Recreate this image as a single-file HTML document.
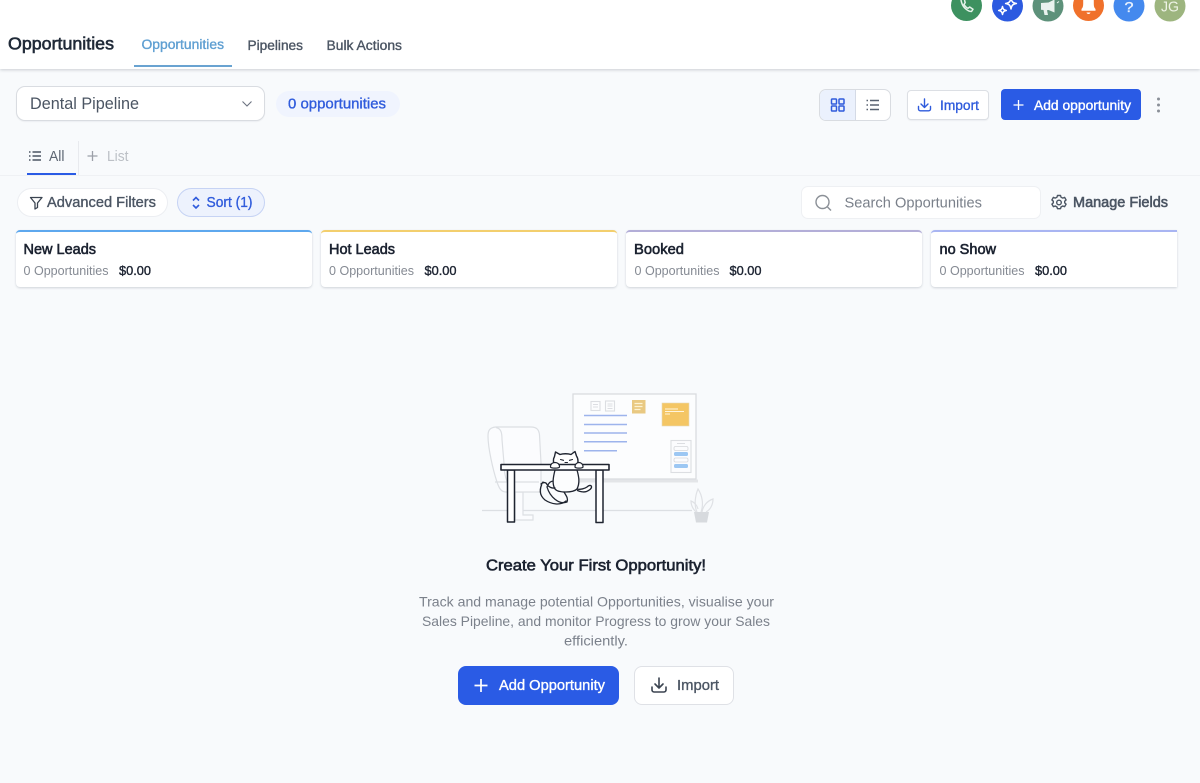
<!DOCTYPE html>
<html lang="en"><head><meta charset="utf-8"><title>Opportunities</title>
<style>
html,body{margin:0;padding:0;width:1200px;height:783px;overflow:hidden;background:#f8fafc}
body{position:relative;font-family:"Liberation Sans",Arial,sans-serif}
.b{position:absolute;box-sizing:border-box}
svg{position:absolute;left:0;top:0}
text{font-family:"Liberation Sans",Arial,sans-serif}
.m{stroke-width:.35;paint-order:stroke}
.s{stroke-width:.6;paint-order:stroke}
.card{background:#fff;border-radius:4px;height:57.5px;top:229.5px;border-top:2px solid;box-shadow:0 1px 2px rgba(30,40,60,.18)}
</style></head><body>
<div class="b" style="left:0;top:0;width:1200px;height:69px;background:#fff;box-shadow:0 1px 3px rgba(40,50,70,.22)"></div>
<div class="b" style="left:134px;top:65px;width:98px;height:2px;background:#69a3d1"></div>
<div class="b" style="left:16px;top:86px;width:249px;height:35px;background:#fff;border:1px solid #d9dce1;border-radius:9px;box-shadow:0 1px 1px rgba(30,40,60,.05)"></div>
<div class="b" style="left:276px;top:91px;width:124px;height:26px;background:#f0f4fe;border-radius:13px"></div>
<div class="b" style="left:819px;top:89px;width:72px;height:32px;background:#fff;border:1px solid #d9dce1;border-radius:7px;overflow:hidden"><div style="width:36px;height:100%;background:#ebf1fd;border-right:1px solid #d4dae6;box-sizing:border-box"></div></div>
<div class="b" style="left:907px;top:90px;width:82px;height:30px;background:#fff;border:1px solid #dcdfe4;border-radius:4px;box-shadow:0 1px 1px rgba(30,40,60,.05)"></div>
<div class="b" style="left:1001px;top:89px;width:140px;height:31px;background:#2a5be5;border-radius:4px"></div>
<div class="b" style="left:0;top:175px;width:1200px;height:1px;background:#eff1f4"></div>
<div class="b" style="left:78px;top:141px;width:1px;height:34px;background:#e8eaee"></div>
<div class="b" style="left:27px;top:172.5px;width:49px;height:2.5px;background:#2a5be5"></div>
<div class="b" style="left:17px;top:188px;width:151px;height:29px;background:#fff;border:1px solid #eceef2;border-radius:15px"></div>
<div class="b" style="left:177px;top:188px;width:88px;height:29px;background:#edf2fd;border:1px solid #c6d3f4;border-radius:15px"></div>
<div class="b" style="left:801px;top:186px;width:240px;height:33px;background:#fff;border:1px solid #eef0f3;border-radius:7px"></div>
<div class="b card" style="left:16px;width:296px;border-color:#5ea8ee"></div>
<div class="b card" style="left:321px;width:296px;border-color:#f3cf6e"></div>
<div class="b card" style="left:626px;width:296px;border-color:#b3aed8"></div>
<div class="b card" style="left:931px;width:246px;border-color:#a9b5f2;border-radius:4px 0 0 4px"></div>
<div class="b" style="left:458px;top:666px;width:161px;height:39px;background:#2a5be5;border-radius:8px"></div>
<div class="b" style="left:634px;top:666px;width:100px;height:39px;background:#fff;border:1px solid #dfe1e6;border-radius:8px"></div>

<svg width="1200" height="783" viewBox="0 0 1200 783" xmlns="http://www.w3.org/2000/svg">
<!-- avatars -->
<circle cx="966.5" cy="5.5" r="15.5" fill="#3d9160"/>
<circle cx="1007.5" cy="6" r="15.5" fill="#2c5ae0"/>
<circle cx="1048" cy="6" r="15.5" fill="#5d917a"/>
<circle cx="1088.5" cy="5.5" r="15.5" fill="#f0712b"/>
<circle cx="1129" cy="6" r="15.5" fill="#4489ee"/>
<circle cx="1170" cy="6" r="15.5" fill="#9db57f"/>
<path d="M961 0c.5 3 1.800 6 3.700 8 2 2 4.500 3.500 6.800 3.500l1.500-2.300-3.300-2.200-1.700 1.300c-1.700-.8-3.200-2.300-4-4l1.200-1.600L964.500 0" fill="none" stroke="#e4f2e9" stroke-width="1.500" stroke-linejoin="round"/>
<path d="M1002.500 6.500c.5 2.700 1.200 3.500 3.800 4-2.600.5-3.300 1.300-3.800 4-.5-2.700-1.200-3.500-3.800-4 2.600-.5 3.300-1.300 3.800-4zM1011 -2c.7 3.800 1.700 4.800 5.400 5.500-3.700.7-4.700 1.700-5.400 5.500-.7-3.800-1.700-4.800-5.400-5.500 3.700-.7 4.700-1.700 5.400-5.500z" fill="none" stroke="#fff" stroke-width="1.500" stroke-linejoin="round"/>
<path d="M1041 3l7.500-.5 6-3v13l-6-2.500-1.500.2 1 4.800h-3.500l-1-5-2.500-.3z" fill="#e9f2ee"/><path d="M1057 3l2-1.500" stroke="#e9f2ee" stroke-width="1"/>
<path d="M1081.500 9c1.600-1.500 1.700-3.500 1.700-6V0h10.600v3c0 2.500.1 4.500 1.700 6v1.800h-14z" fill="#fff"/><path d="M1086.500 12.500h4c-.3 1-1 1.500-2 1.500s-1.700-.5-2-1.500z" fill="#fff"/>
<text x="1124.500" y="12" font-size="15" fill="#e8f1fe" class="m" stroke="#e8f1fe" textLength="9" lengthAdjust="spacingAndGlyphs">?</text>
<text x="1161" y="11.500" font-size="15" fill="#eef3e6" textLength="18" lengthAdjust="spacingAndGlyphs">JG</text>

<!-- header text -->
<text x="8" y="49.500" font-size="17.500" fill="#1f2937" class="s" stroke="#1f2937" textLength="106" lengthAdjust="spacingAndGlyphs">Opportunities</text>
<text x="141.500" y="49" font-size="13.500" fill="#5f9fd2" class="m" stroke="#5f9fd2" textLength="82.500" lengthAdjust="spacingAndGlyphs">Opportunities</text>
<text x="247.500" y="50" font-size="13.500" fill="#4b5563" class="m" stroke="#4b5563" textLength="55.500" lengthAdjust="spacingAndGlyphs">Pipelines</text>
<text x="326.500" y="50" font-size="13.500" fill="#4b5563" class="m" stroke="#4b5563" textLength="75.500" lengthAdjust="spacingAndGlyphs">Bulk Actions</text>

<!-- toolbar -->
<text x="30" y="109" font-size="17" fill="#4b5563" textLength="109" lengthAdjust="spacingAndGlyphs">Dental Pipeline</text>
<path d="M242.500 101.500l4.500 4.500 4.500-4.500" fill="none" stroke="#6b7280" stroke-width="1.100"/>
<text x="288" y="108.500" font-size="15" fill="#2f5bdc" class="m" stroke="#2f5bdc" textLength="98" lengthAdjust="spacingAndGlyphs">0 opportunities</text>
<g fill="none" stroke="#2f5bdc" stroke-width="1.500"><rect x="831.500" y="99" width="5" height="5" rx=".8"/><rect x="839" y="99" width="5" height="5" rx=".8"/><rect x="831.500" y="106" width="5" height="5" rx=".8"/><rect x="839" y="106" width="5" height="5" rx=".8"/></g>
<path d="M870 100.500h9M870 105h9M870 109.500h9M866.500 100.500h1.500M866.500 105h1.500M866.500 109.500h1.500" stroke="#586271" stroke-width="1.500" fill="none"/>
<path d="M924.500 99v8.500M921 104l3.500 3.500 3.500-3.500M918.500 106.500v2.500c0 1 .8 1.800 1.800 1.800h8.400c1 0 1.800-.8 1.800-1.800v-2.500" fill="none" stroke="#2f5bdc" stroke-width="1.400" stroke-linecap="round" stroke-linejoin="round"/>
<text x="940" y="110" font-size="13.500" fill="#2f5bdc" class="m" stroke="#2f5bdc" textLength="39" lengthAdjust="spacingAndGlyphs">Import</text>
<path d="M1018.500 100v10M1013.500 105h10" stroke="#fff" stroke-width="1.300"/>
<text x="1034" y="110" font-size="14" fill="#fff" class="m" stroke="#fff" textLength="97" lengthAdjust="spacingAndGlyphs">Add opportunity</text>
<g fill="#8a8f98"><circle cx="1158.500" cy="99" r="1.500"/><circle cx="1158.500" cy="105" r="1.500"/><circle cx="1158.500" cy="111" r="1.500"/></g>

<!-- tabs -->
<path d="M32.500 152h8.500M32.500 156h8.500M32.500 160h8.500M29 152h1.500M29 156h1.500M29 160h1.500" stroke="#4b5563" stroke-width="1.500" fill="none"/>
<text x="49" y="161" font-size="14.500" fill="#5d6673" textLength="15.500" lengthAdjust="spacingAndGlyphs">All</text>
<path d="M92.500 151v10M87.500 156h10" stroke="#9ca0a8" stroke-width="1.300"/>
<text x="107" y="161" font-size="14.500" fill="#bcc0c6" textLength="21.500" lengthAdjust="spacingAndGlyphs">List</text>

<!-- filters -->
<path d="M30.500 197.500h11.500l-4.500 5.500v4.500l-2.500 1.500v-6z" fill="none" stroke="#3b4451" stroke-width="1.300" stroke-linejoin="round"/>
<text x="47" y="207" font-size="15" fill="#4b5563" class="m" stroke="#4b5563" textLength="109" lengthAdjust="spacingAndGlyphs">Advanced Filters</text>
<path d="M193 200.500l3-3 3 3M193 205l3 3 3-3" fill="none" stroke="#2f5bdc" stroke-width="1.600"/>
<text x="206.500" y="207" font-size="15" fill="#2f5bdc" class="m" stroke="#2f5bdc" textLength="46" lengthAdjust="spacingAndGlyphs">Sort (1)</text>
<circle cx="822.500" cy="202" r="6.500" fill="none" stroke="#8b9097" stroke-width="1.400"/><path d="M827.500 207l3.500 3.500" stroke="#8b9097" stroke-width="1.400"/>
<text x="844.500" y="207.500" font-size="15" fill="#7a808a" textLength="137.500" lengthAdjust="spacingAndGlyphs">Search Opportunities</text>
<g fill="none" stroke="#4b5563" stroke-width="1.400"><circle cx="1059" cy="202.500" r="2.300"/><path d="M1057.500 195.500h3l.6 1.800 1.700.8 1.800-.7 1.500 2.600-1.400 1.200v1.700l1.400 1.200-1.500 2.600-1.800-.7-1.700.9-.6 1.800h-3l-.6-1.800-1.700-.9-1.800.7-1.500-2.600 1.400-1.200v-1.700l-1.400-1.200 1.500-2.600 1.800.7 1.700-.8z" stroke-linejoin="round"/></g>
<text x="1073" y="207" font-size="15" fill="#4b5563" class="s" stroke="#4b5563" textLength="95" lengthAdjust="spacingAndGlyphs">Manage Fields</text>

<!-- cards -->
<g font-size="15" fill="#1b2230" stroke="#1b2230">
<text x="23.500" y="254" class="s" textLength="72.500" lengthAdjust="spacingAndGlyphs">New Leads</text>
<text x="329" y="254" class="s" textLength="66" lengthAdjust="spacingAndGlyphs">Hot Leads</text>
<text x="634" y="254" class="s" textLength="50" lengthAdjust="spacingAndGlyphs">Booked</text>
<text x="939.500" y="254" class="s" textLength="56.500" lengthAdjust="spacingAndGlyphs">no Show</text>
</g>
<g font-size="13" fill="#858a93">
<text x="23.500" y="275" textLength="85" lengthAdjust="spacingAndGlyphs">0 Opportunities</text>
<text x="329" y="275" textLength="85" lengthAdjust="spacingAndGlyphs">0 Opportunities</text>
<text x="634.500" y="275" textLength="85" lengthAdjust="spacingAndGlyphs">0 Opportunities</text>
<text x="939.500" y="275" textLength="85" lengthAdjust="spacingAndGlyphs">0 Opportunities</text>
</g>
<g font-size="12.500" fill="#1b2230" stroke="#1b2230" class="m">
<text x="119" y="275" class="m" textLength="32" lengthAdjust="spacingAndGlyphs">$0.00</text>
<text x="424.500" y="275" class="m" textLength="32" lengthAdjust="spacingAndGlyphs">$0.00</text>
<text x="729.500" y="275" class="m" textLength="32" lengthAdjust="spacingAndGlyphs">$0.00</text>
<text x="1035" y="275" class="m" textLength="32" lengthAdjust="spacingAndGlyphs">$0.00</text>
</g>

<!-- illustration -->
<path d="M482 510.500H692" stroke="#dcdfe3" stroke-width="1.300"/>
<g fill="#fbfcfe" stroke="#dcdfe3" stroke-width="1.200">
<path d="M515 492h8v23h10v5h-18z"/>
<path d="M497 482c-4-12-9-34-9-46 0-6 2-8.500 8-9h35c6 0 8 3 8.500 8l1.500 28v29h-35c-5 0-7-4-9-10z"/>
<path d="M496 427.500c5 1 6 5 6 12l2 24c0 8 1 13 3 18" fill="none"/>
<path d="M495 482h44" fill="none"/>
</g>
<rect x="573" y="394" width="123" height="85" fill="#fcfdfe" stroke="#dadcdf" stroke-width="1.300"/>
<rect x="577" y="479.500" width="121" height="3" fill="#e3e5e8"/>
<g fill="none" stroke="#dcdee2" stroke-width="1.100">
<rect x="591" y="401.500" width="9" height="9"/><rect x="605.500" y="401" width="9" height="10"/>
<path d="M593 404.500h5M593 407h5M607.500 404h5M607.500 406h5M607.500 408.500h5"/>
</g>
<g stroke="#9db4ec" stroke-width="1.500"><path d="M584 415.500h43M584 424.500h43M584 433h43M584 441.700h43M584 450.700h33"/></g>
<rect x="632" y="400" width="13.500" height="13.500" fill="#e9c982"/>
<path d="M634.500 403.500h8M634.500 406.500h8M634.500 409.500h6" stroke="#fdf3d2" stroke-width="1.300"/>
<rect x="662" y="403" width="27" height="23" fill="#f4c664" stroke="#e5d9b8" stroke-width=".6"/>
<path d="M665 409h13M665 411.500h19M665 414h5" stroke="#fff5dc" stroke-width="1.100"/>
<rect x="671" y="440.500" width="20" height="32" fill="#fbfcfe" stroke="#dcdee2" stroke-width="1.100"/>
<path d="M677 443.500h8" stroke="#dcdee2"/>
<rect x="674" y="446.500" width="14" height="4" rx="1.500" fill="none" stroke="#d6d8dc" stroke-width=".8"/>
<rect x="674" y="452" width="14" height="4" rx="1.500" fill="#9cc7f3"/>
<rect x="674" y="458" width="14" height="4" rx="1.500" fill="none" stroke="#d6d8dc" stroke-width=".8"/>
<rect x="674" y="464" width="14" height="4" rx="1.500" fill="#9cc7f3"/>
<path d="M694 512l2 10.500h11l2-10.500z" fill="#d7dade"/>
<g fill="none" stroke="#dfe1e5" stroke-width="1.200"><path d="M697 512c-3-6-2-16 1-23 4 6 6 15 3 23"/><path d="M696 512c-3-3-5-7-5-11 3 1 6 4 7 8"/><path d="M702 512c1-6 5-11 11-13 0 6-3 11-7 13"/></g>

<g stroke="#1f2430" stroke-width="1.500" stroke-linejoin="round" stroke-linecap="round">
<rect x="507.500" y="470" width="7" height="52" fill="#fff"/>
<rect x="596" y="470" width="7" height="52.500" fill="#fff"/>
<path d="M561 486c3 8 8 11 6 16-8 3-17-5-20-15 2-5 4-6 7-6" fill="#fbfcfe" stroke-width="1.300"/>
<path d="M543 482c-4 7-4 13 2 18 6 4 15 6 21 1" fill="none" stroke-width="1.300"/>
<path d="M555 470c-2 8-3 14 0 19 3 4 18 4 22 0 3-6 2-12 0-19z" fill="#fcfdfe" stroke-width="1.300"/>
<path d="M541 484c2-2 5-2 6 .5 1.500 2.500 5 4 8 3.500" fill="#fff" stroke-width="1.300"/>
<path d="M577 489c3 1 8-.5 10-2 2-2 4-2 4.500-.5.500 2-2.500 4-5 5-3 1-7 0-9-1" fill="#fff" stroke-width="1.300"/>
<path d="M555 466c-2-3-2-7-.5-9.500l1-4.500 4.500 2.500c3-1 8-1 11 0l4-3 1.500 4.500c2 3 2 7 0 10z" fill="#fff" stroke-width="1.400"/>
<rect x="501" y="464.500" width="108" height="5.500" fill="#fff" stroke-width="1.600"/>
<path d="M550.500 467c0-3 2-4.500 4.500-4.500s4.500 1.500 4.500 4.500c0 1.500-9 1.500-9 0zM575 467c0-3 2-4.500 4-4.500s4 1.500 4 4.500c0 1.500-8 1.500-8 0z" fill="#fff" stroke-width="1.200"/>
<path d="M560.500 459.500l3 .8M569.500 460.300l3-.8M565 462.500h2.500" fill="none" stroke-width="1.100"/>
</g>

<!-- empty state -->
<text x="486" y="570.500" font-size="16" fill="#1b2230" class="s" stroke="#1b2230" textLength="220" lengthAdjust="spacingAndGlyphs">Create Your First Opportunity!</text>
<g font-size="14" fill="#7b818b">
<text x="419" y="606.500" textLength="355" lengthAdjust="spacingAndGlyphs">Track and manage potential Opportunities, visualise your</text>
<text x="422" y="626" textLength="348" lengthAdjust="spacingAndGlyphs">Sales Pipeline, and monitor Progress to grow your Sales</text>
<text x="564" y="645.500" textLength="64" lengthAdjust="spacingAndGlyphs">efficiently.</text>
</g>
<path d="M481 679v13M474.500 685.500h13" stroke="#fff" stroke-width="1.700"/>
<text x="499" y="690" font-size="14.500" fill="#fff" class="m" stroke="#fff" textLength="106" lengthAdjust="spacingAndGlyphs">Add Opportunity</text>
<path d="M659 678v10M655 684l4 4 4-4M652 687v3c0 1 .8 2 2 2h10c1.200 0 2-1 2-2v-3" fill="none" stroke="#3b4451" stroke-width="1.600" stroke-linecap="round" stroke-linejoin="round"/>
<text x="677" y="690" font-size="14.500" fill="#4b5563" class="m" stroke="#4b5563" textLength="42" lengthAdjust="spacingAndGlyphs">Import</text>
</svg>
</body></html>
